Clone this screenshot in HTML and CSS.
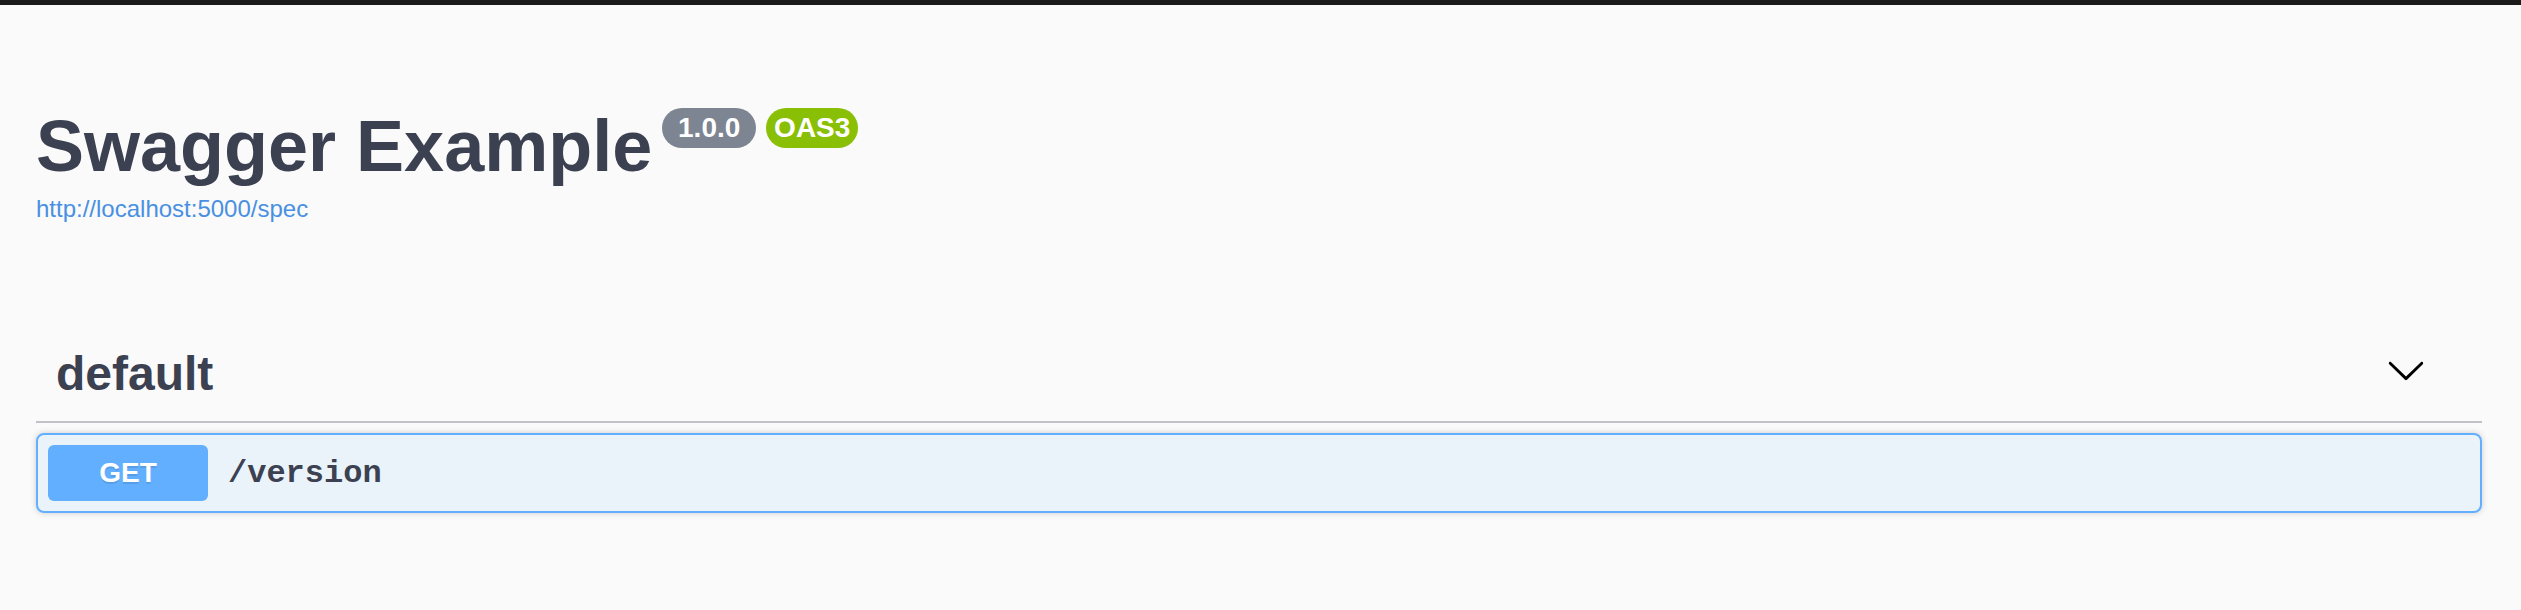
FILE: index.html
```html
<!DOCTYPE html>
<html lang="en">
<head>
<meta charset="utf-8">
<title>Swagger Example</title>
<link rel="stylesheet" href="styles.css">
</head>
<body>
<div class="topbar"></div>
<div class="wrapper">
  <section class="info">
    <hgroup class="main">
      <h2 class="title">Swagger Example<span class="stamps"><small class="stamp"><span class="version"> 1.0.0 </span></small><small class="stamp oas"><span class="version">OAS3</span></small></span></h2>
      <a class="url" href="#">http://localhost:5000/spec</a>
    </hgroup>
  </section>
  <section class="tag-section">
    <h3 class="opblock-tag">
      <span class="tag-name">default</span>
      <svg class="arrow" width="40" height="40" viewBox="0 0 20 20" aria-hidden="true"><path d="M17.418 6.109c.272-.268.709-.268.979 0s.271.701 0 .969l-7.908 7.83c-.27.268-.707.268-.979 0l-7.908-7.83c-.27-.268-.27-.701 0-.969.271-.268.709-.268.979 0L10 13.25l7.418-7.141z"/></svg>
    </h3>
    <div class="opblock get">
      <div class="summary">
        <span class="method">GET</span>
        <span class="path">/version</span>
      </div>
    </div>
  </section>
</div>
</body>
</html>
```

FILE: styles.css
```css
html, body {
  margin: 0;
  padding: 0;
  background: #fafafa;
}

body {
  font-family: "Liberation Sans", Arial, sans-serif;
  color: #3b4151;
}

.topbar {
  height: 5px;
  background: #1b1b1b;
}

.wrapper {
  padding: 0 39px 0 36px;
}

.info {
  margin: 100px 0 103px;
}

.main {
  margin: 0;
}

.title {
  margin: 0;
  font-size: 72px;
  font-weight: 700;
  line-height: normal;
  color: #3b4151;
}

.stamps {
  display: inline-block;
  vertical-align: top;
}

.stamp {
  display: inline-block;
  vertical-align: top;
  margin: 3px 0 0 10px;
  padding: 4px 8px;
  border-radius: 114px;
  background: #7d8492;
}

.stamp.oas {
  background: #89bf04;
}

.version {
  display: block;
  white-space: pre;
  font-family: "Liberation Sans", Arial, sans-serif;
  font-size: 28px;
  font-weight: 700;
  line-height: normal;
  color: #fff;
}

.url {
  display: block;
  margin-top: 8px;
  font-size: 24px;
  line-height: normal;
  color: #4990e2;
  text-decoration: none;
}

.opblock-tag {
  display: flex;
  align-items: center;
  margin: 0 0 10px;
  padding: 20px 56px 20px 20px;
  border-bottom: 2px solid rgba(59, 65, 81, 0.3);
  font-size: 48px;
  font-weight: 700;
  line-height: normal;
  color: #3b4151;
}

.tag-name {
  flex: 1;
}

.arrow {
  flex: none;
  margin-bottom: 8px;
  fill: #000;
}

.opblock {
  margin: 0 0 30px;
  border: 2px solid #61affe;
  border-radius: 8px;
  background: rgba(97, 175, 254, 0.1);
  box-shadow: 0 0 6px rgba(0, 0, 0, 0.19);
}

.summary {
  display: flex;
  align-items: center;
  padding: 10px;
}

.method {
  min-width: 160px;
  padding: 12px 0;
  border-radius: 6px;
  background: #61affe;
  color: #fff;
  font-size: 28px;
  font-weight: 700;
  line-height: normal;
  text-align: center;
  text-shadow: 0 2px 0 rgba(0, 0, 0, 0.1);
}

.path {
  padding: 0 20px;
  font-family: "Liberation Mono", "Courier New", monospace;
  font-size: 32px;
  font-weight: 700;
  color: #3b4151;
}
```
